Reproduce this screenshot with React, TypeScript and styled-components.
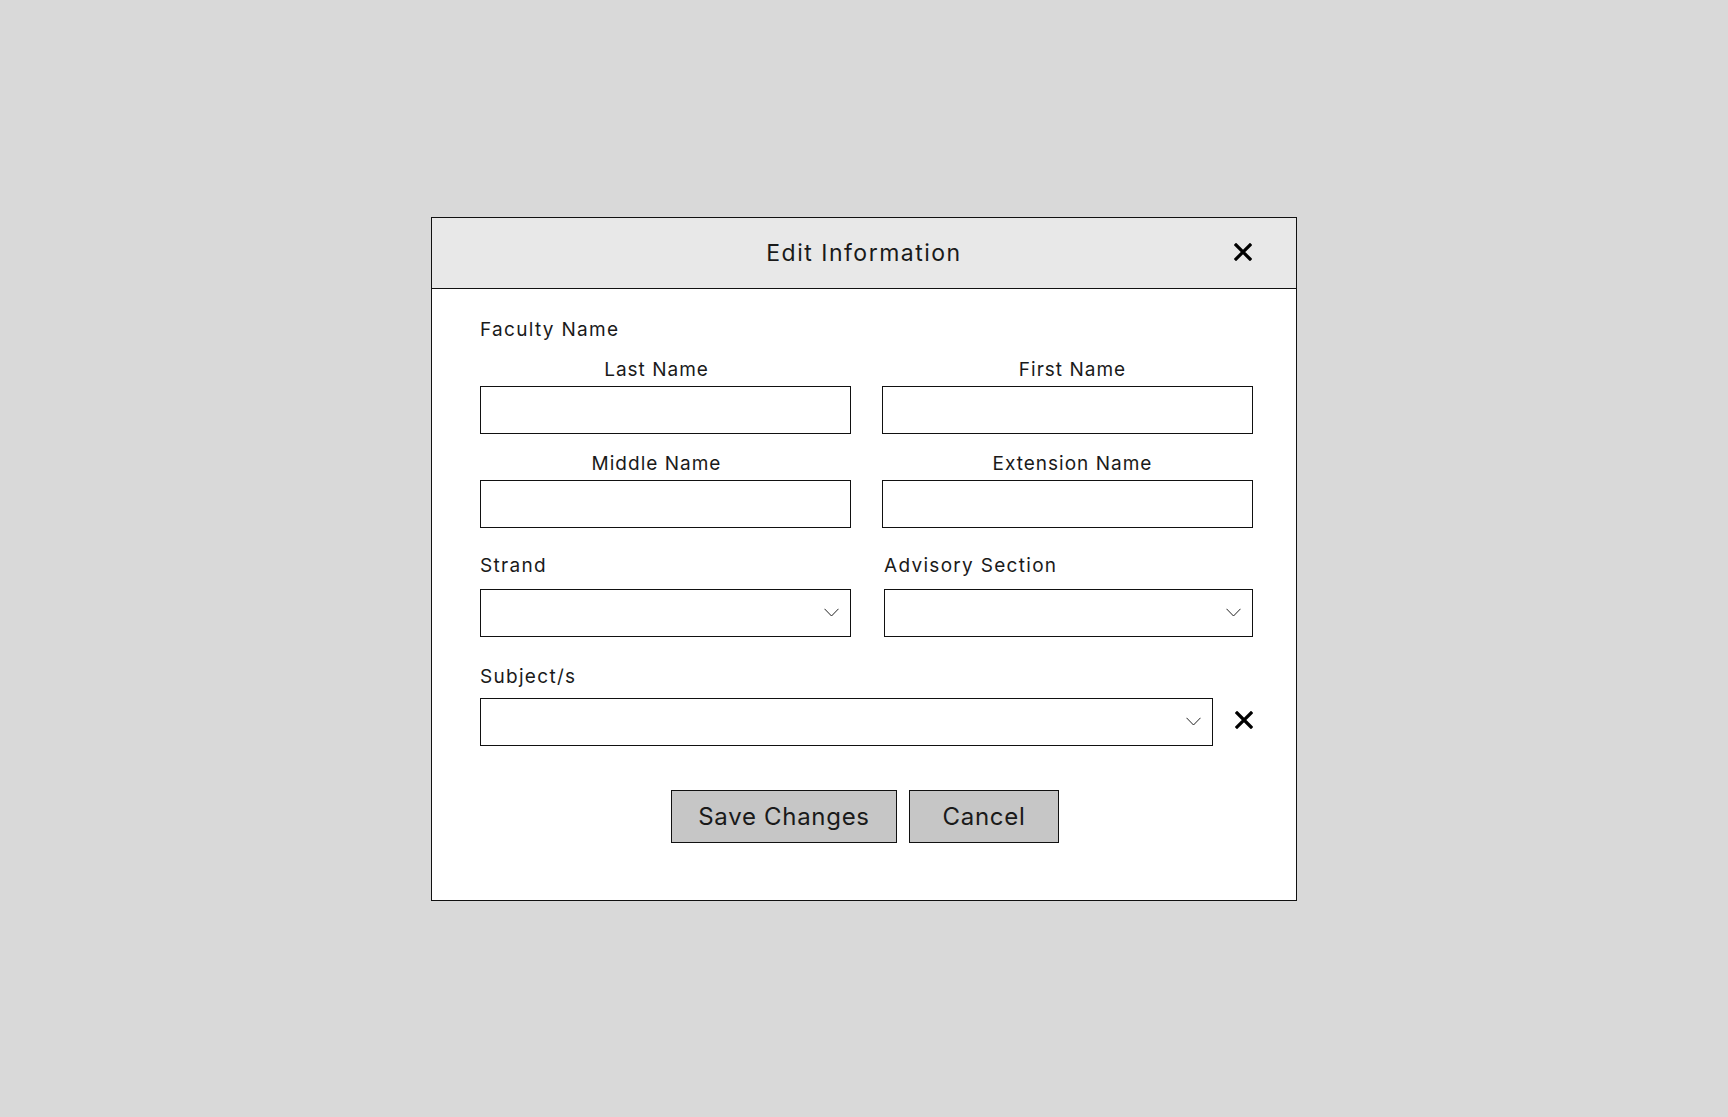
import React from 'react'
import styled, { createGlobalStyle } from 'styled-components'

const GlobalStyle = createGlobalStyle`
  html, body {
    margin: 0;
    padding: 0;
    background: #d9d9d9;
  }
  * {
    box-sizing: border-box;
  }
`

const CloseIcon = ({ size = 18 }: { size?: number }) => (
  <svg width={size} height={size} viewBox='0 0 18 18'>
    <path d='M2 2 L16 16 M16 2 L2 16' stroke='#000' strokeWidth='3.2' strokeLinecap='square' fill='none' />
  </svg>
)

const Chevron = () => (
  <svg width='15' height='9' viewBox='0 0 15 9'>
    <path d='M0.5 0.8 L7.5 8 L14.5 0.8' stroke='#222' strokeWidth='1' fill='none' />
  </svg>
)

export default function App() {
  return (
    <Page>
      <GlobalStyle />
      <Modal>
        <Header>
          <span />
          <Title>Edit Information</Title>
          <CloseButton aria-label='close'>
            <CloseIcon />
          </CloseButton>
        </Header>
        <Body>
          <SectionLabel>Faculty Name</SectionLabel>
          <NameGrid>
            <Field>
              <CenterLabel offset={-9}>Last Name</CenterLabel>
              <TextInput />
            </Field>
            <Field>
              <CenterLabel offset={5}>First Name</CenterLabel>
              <TextInput />
            </Field>
            <Field>
              <CenterLabel offset={-9}>Middle Name</CenterLabel>
              <TextInput />
            </Field>
            <Field>
              <CenterLabel offset={5}>Extension Name</CenterLabel>
              <TextInput />
            </Field>
          </NameGrid>
          <SelectGrid>
            <Field>
              <SectionLabel>Strand</SectionLabel>
              <Select>
                <Chevron />
              </Select>
            </Field>
            <Field>
              <SectionLabel>Advisory Section</SectionLabel>
              <Select>
                <Chevron />
              </Select>
            </Field>
          </SelectGrid>
          <SubjectField>
            <SectionLabel>Subject/s</SectionLabel>
            <SubjectRow>
              <Select grow>
                <Chevron />
              </Select>
              <RemoveButton aria-label='remove subject'>
                <CloseIcon />
              </RemoveButton>
            </SubjectRow>
          </SubjectField>
          <Actions>
            <ActionButton width={226}>Save Changes</ActionButton>
            <ActionButton width={150}>Cancel</ActionButton>
          </Actions>
        </Body>
      </Modal>
    </Page>
  )
}

const Page = styled.div`
  min-height: 100vh;
  display: flex;
  align-items: center;
  justify-content: center;
  font-family: Inter, 'Open Sans', sans-serif;
  color: #1a1a1a;
`

const Modal = styled.div`
  width: 866px;
  background: #fff;
  border: 1px solid #111;
`

const Header = styled.div`
  height: 71px;
  display: grid;
  grid-template-columns: 1fr auto 1fr;
  align-items: center;
  background: #e8e8e8;
  border-bottom: 1px solid #111;
  padding: 0 44px 0 44px;
`

const Title = styled.h2`
  margin: 0;
  font-size: 23px;
  font-weight: 400;
  letter-spacing: 1.5px;
`

const CloseButton = styled.button`
  justify-self: end;
  display: flex;
  padding: 0;
  margin-top: -2px;
  border: 0;
  background: none;
  cursor: pointer;
`

const Body = styled.div`
  padding: 29px 43px 57px 48px;
  display: flex;
  flex-direction: column;
`

const SectionLabel = styled.div`
  font-size: 19px;
  line-height: 24px;
  letter-spacing: 1.3px;
`

const NameGrid = styled.div`
  display: grid;
  grid-template-columns: 1fr 1fr;
  column-gap: 31px;
  row-gap: 18px;
  margin-top: 16px;
`

const Field = styled.div`
  display: flex;
  flex-direction: column;
  gap: 4px;
`

const CenterLabel = styled(SectionLabel)<{ offset: number }>`
  text-align: center;
  letter-spacing: 1px;
  transform: translateX(${p => p.offset}px);
`

const TextInput = styled.input`
  height: 48px;
  width: 100%;
  border: 1px solid #111;
  background: #fff;
  font: inherit;
  padding: 0 12px;
  outline: none;
`

const SelectGrid = styled.div`
  display: grid;
  grid-template-columns: 371px 1fr;
  column-gap: 33px;
  margin-top: 26px;
  & > div {
    gap: 11px;
  }
`

const Select = styled.div<{ grow?: boolean }>`
  height: 48px;
  flex: ${p => (p.grow ? 1 : 'none')};
  border: 1px solid #111;
  background: #fff;
  display: flex;
  align-items: center;
  justify-content: flex-end;
  padding-right: 11px;
  cursor: pointer;
`

const SubjectField = styled.div`
  display: flex;
  flex-direction: column;
  gap: 9px;
  margin-top: 28px;
`

const SubjectRow = styled.div`
  display: flex;
  align-items: center;
  gap: 22px;
  & > button {
    margin-top: -4px;
  }
`

const RemoveButton = styled.button`
  display: flex;
  padding: 0;
  border: 0;
  background: none;
  cursor: pointer;
`

const Actions = styled.div`
  display: flex;
  justify-content: center;
  gap: 12px;
  margin-top: 44px;
  padding-right: 3px;
`

const ActionButton = styled.button<{ width: number }>`
  width: ${p => p.width}px;
  height: 53px;
  background: #c6c6c6;
  border: 1px solid #111;
  font-family: Inter, 'Open Sans', sans-serif;
  font-size: 24px;
  letter-spacing: 0.7px;
  color: #1a1a1a;
  cursor: pointer;
`
